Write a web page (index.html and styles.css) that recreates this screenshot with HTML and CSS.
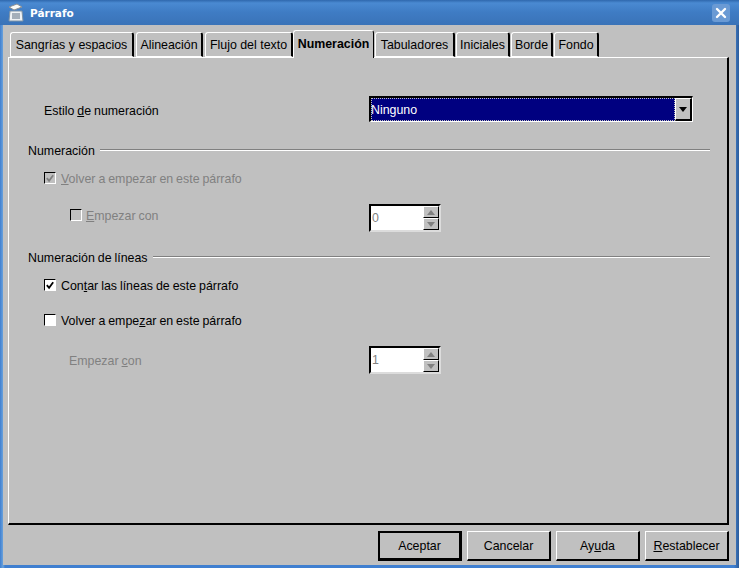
FILE: index.html
```html
<!DOCTYPE html>
<html lang="es">
<head>
<meta charset="utf-8">
<title>Párrafo</title>
<link rel="stylesheet" href="styles.css">
</head>
<body>
<div class="window">
  <header class="titlebar">
    <svg class="app-icon" width="18" height="20" viewBox="0 0 18 20">
      <path d="M3 8h12l1 10H2z" fill="#eef1f4" stroke="#7f93a6" stroke-width="1"/>
      <path d="M2 4l8-3 5 3-8 3z" fill="#fafaf6" stroke="#8a8f94" stroke-width="1"/>
      <path d="M5 11h8M5 13h8M5 15h8" stroke="#5a6d80" stroke-width="1"/>
    </svg>
    <span class="title">Párrafo</span>
    <span class="close">
      <svg width="12" height="12" viewBox="0 0 12 12"><path d="M2 2l8 8M10 2l-8 8" stroke="#fff" stroke-width="2.4" stroke-linecap="round"/></svg>
    </span>
  </header>
  <div class="body">
    <nav class="tabs">
      <span class="tab t1">Sangrías y espacios</span>
      <span class="tab t2">Alineación</span>
      <span class="tab t3">Flujo del texto</span>
      <span class="tab active">Numeración</span>
      <span class="tab t5">Tabuladores</span>
      <span class="tab t6">Iniciales</span>
      <span class="tab t7">Borde</span>
      <span class="tab t8">Fondo</span>
    </nav>
    <main class="panel">
      <div class="row style-row">
        <label class="style-label">Estilo <u>d</u>e numeración</label>
        <div class="combo">
          <span class="combo-value">Ninguno</span>
          <span class="combo-btn"><svg width="8" height="5" viewBox="0 0 8 5"><path d="M0 0h8L4 5z" fill="#000"/></svg></span>
        </div>
      </div>
      <div class="sep s1"><span class="txt">Numeración</span><i></i></div>
      <div class="row check-row c1 disabled">
        <span class="check on"><svg width="11" height="11" viewBox="0 0 11 11"><path d="M2 5l2.500 3L9 2" fill="none" stroke="#808080" stroke-width="2"/></svg></span>
        <span class="txt"><u>V</u>olver a empezar en este párrafo</span>
      </div>
      <div class="row spin-row r2 disabled">
        <div class="sub-check">
          <span class="check off"></span>
          <span class="txt"><u>E</u>mpezar con</span>
        </div>
        <div class="spin"><span class="spin-val">0</span><span class="spin-btns"><b class="up"><svg width="8" height="5" viewBox="0 0 8 5"><path d="M4 0l4 5H0z" fill="#808080"/></svg></b><b class="down"><svg width="8" height="5" viewBox="0 0 8 5"><path d="M0 0h8L4 5z" fill="#808080"/></svg></b></span></div>
      </div>
      <div class="sep s2"><span class="txt">Numeración de líneas</span><i></i></div>
      <div class="row check-row c3">
        <span class="check white"><svg width="11" height="11" viewBox="0 0 11 11"><path d="M2 5l2.500 3L9 2" fill="none" stroke="#000" stroke-width="2"/></svg></span>
        <span class="txt">Con<u>t</u>ar las líneas de este párrafo</span>
      </div>
      <div class="row check-row c4">
        <span class="check white"></span>
        <span class="txt">Volver a empe<u>z</u>ar en este párrafo</span>
      </div>
      <div class="row spin-row r5 disabled">
        <span class="plain-label txt">Empezar <u>c</u>on</span>
        <div class="spin"><span class="spin-val">1</span><span class="spin-btns"><b class="up"><svg width="8" height="5" viewBox="0 0 8 5"><path d="M4 0l4 5H0z" fill="#808080"/></svg></b><b class="down"><svg width="8" height="5" viewBox="0 0 8 5"><path d="M0 0h8L4 5z" fill="#808080"/></svg></b></span></div>
      </div>
    </main>
    <footer class="buttons">
      <span class="btn default">Aceptar</span>
      <span class="btn">Cancelar</span>
      <span class="btn">Ay<u>u</u>da</span>
      <span class="btn"><u>R</u>establecer</span>
    </footer>
  </div>
</div>
</body>
</html>
```
FILE: styles.css
```css
* { box-sizing: border-box; }
html, body { margin: 0; padding: 0; }
body {
  width: 739px;
  height: 568px;
  overflow: hidden;
  background: #4a86cc;
  font-family: "Liberation Sans", Arial, sans-serif;
  font-size: 12.4px;
  color: #000;
}
.window {
  width: 739px;
  height: 568px;
  display: flex;
  flex-direction: column;
  background: linear-gradient(90deg, #3f7fd0 0, #6aa2dc 3px, #3f7fd0 5px, #3f7fd0 734px, #2d5c98 739px);
  padding: 0 3px 3px 3px;
}
.titlebar {
  height: 25px;
  margin: 0 -3px;
  padding: 0 9px 0 7px;
  display: flex;
  align-items: center;
  background: linear-gradient(180deg, #2f68ad 0, #4a8ad2 3px, #3f7cc4 12px, #3a73b8 25px);
  flex: none;
}
.app-icon { flex: none; }
.title {
  margin-left: 5px;
  font-family: "DejaVu Sans", sans-serif;
  font-weight: bold;
  font-size: 10.5px;
  color: #fff;
  flex: 1;
}
.close {
  width: 18px;
  height: 18px;
  border-radius: 3px;
  background: #6a9ad4;
  display: flex;
  align-items: center;
  justify-content: center;
}
.body {
  flex: 1;
  min-height: 0;
  background: #c0c0c0;
  padding: 5px 6px 0 5px;
  display: flex;
  flex-direction: column;
}
.tabs {
  display: flex;
  height: 27px;
  flex: none;
  padding-left: 2px;
  align-items: flex-end;
  position: relative;
  z-index: 1;
}
.tab {
  height: 25px;
  background: #c0c0c0;
  border-left: 1px solid #fff;
  border-top: 1px solid #fff;
  border-right: 2px solid #000;
  border-radius: 3px 3px 0 0;
  border-bottom: 1px solid #fff;
  display: flex;
  align-items: center;
  justify-content: center;
  white-space: nowrap;
  margin-right: 2px;
}
.t1 { width: 124px; }
.t2 { width: 67px; }
.t3 { width: 88px; margin-right: 0; }
.active {
  width: 81px;
  height: 28px;
  font-weight: bold;
  border-right: 1px solid #000;
  border-bottom: 0;
  margin-right: 1px;
  margin-bottom: -1px;
  padding-bottom: 2px;
}
.t5 { width: 80px; margin-right: 1px; }
.t6 { width: 54px; margin-right: 1px; }
.t7 { width: 42px; margin-right: 1px; }
.t8 { width: 45px; }
.panel {
  flex: none;
  height: 468px;
  width: 721px;
  border-left: 1px solid #fff;
  border-top: 1px solid #fff;
  border-right: 2px solid #000;
  border-bottom: 2px solid #000;
  padding: 38px 0 0 0;
  display: flex;
  flex-direction: column;
}
.row { display: flex; align-items: center; flex: none; }
.txt { padding-top: 2px; word-spacing: -0.5px; }
.style-row { height: 26px; padding-left: 35px; }
.style-label { width: 325px; padding-top: 3px; word-spacing: -0.5px; }
.combo {
  width: 324px;
  height: 26px;
  display: flex;
  border-left: 2px solid #000;
  border-top: 2px solid #000;
  border-right: 1px solid #fff;
  border-bottom: 1px solid #fff;
  background: #000080;
  color: #fff;
}
.combo-value {
  flex: 1;
  display: flex;
  align-items: center;
  padding-left: 0;
  outline: 1px dotted #c0c0c0;
  outline-offset: -1px;
}
.combo-btn {
  width: 17px;
  background: #c0c0c0;
  border-left: 1px solid #fff;
  border-top: 1px solid #fff;
  border-right: 2px solid #000;
  border-bottom: 2px solid #000;
  display: flex;
  align-items: center;
  justify-content: center;
}
.sep {
  height: 16px;
  flex: none;
  display: flex;
  align-items: center;
  gap: 5px;
  padding-left: 19px;
  margin-right: 17px;
}
.sep i {
  flex: 1;
  height: 2px;
  border-top: 1px solid #808080;
  border-bottom: 1px solid #fff;
}
.s1 { margin-top: 20px; }
.s2 { margin-top: 17px; }
.check-row { height: 16px; padding-left: 35px; gap: 5px; }
.c1 { margin-top: 12px; }
.c3 { margin-top: 12px; }
.c4 { margin-top: 19px; }
.check {
  width: 12px;
  height: 12px;
  flex: none;
  border-left: 1px solid #000;
  border-top: 1px solid #000;
  border-right: 1px solid #fff;
  border-bottom: 1px solid #fff;
  display: flex;
  align-items: center;
  justify-content: center;
}
.white { background: #fff; }
.disabled { color: #808080; }
.spin-row { height: 28px; }
.r2 { margin-top: 18px; }
.r5 { margin-top: 18px; }
.sub-check {
  width: 360px;
  padding-left: 61px;
  display: flex;
  align-items: center;
  gap: 4px;
  margin-top: -6px;
}
.plain-label { width: 360px; padding-left: 60px; }
.spin {
  width: 72px;
  height: 28px;
  display: flex;
  background: #fff;
  border-left: 2px solid #000;
  border-top: 2px solid #000;
  border-right: 2px solid #dcdcdc;
  border-bottom: 2px solid #dcdcdc;
}
.spin-val { flex: 1; padding: 5px 0 0 1px; }
.spin-btns { width: 16px; display: flex; flex-direction: column; flex: none; }
.spin-btns b {
  flex: 1;
  background: #c0c0c0;
  border-left: 1px solid #fff;
  border-top: 1px solid #fff;
  border-right: 1px solid #000;
  border-bottom: 1px solid #000;
  display: flex;
  align-items: center;
  justify-content: center;
}
.buttons {
  flex: 1;
  display: flex;
  justify-content: flex-end;
  gap: 5px;
  padding: 6px 0 4px 0;
  margin-right: 1px;
}
.btn {
  width: 84px;
  height: 30px;
  background: #c0c0c0;
  border-left: 1px solid #fff;
  border-top: 1px solid #fff;
  border-right: 2px solid #000;
  border-bottom: 2px solid #000;
  display: flex;
  align-items: center;
  justify-content: center;
  white-space: pre;
}
.default { border: 2px solid #000; border-right-width: 3px; border-bottom-width: 3px; }
```
